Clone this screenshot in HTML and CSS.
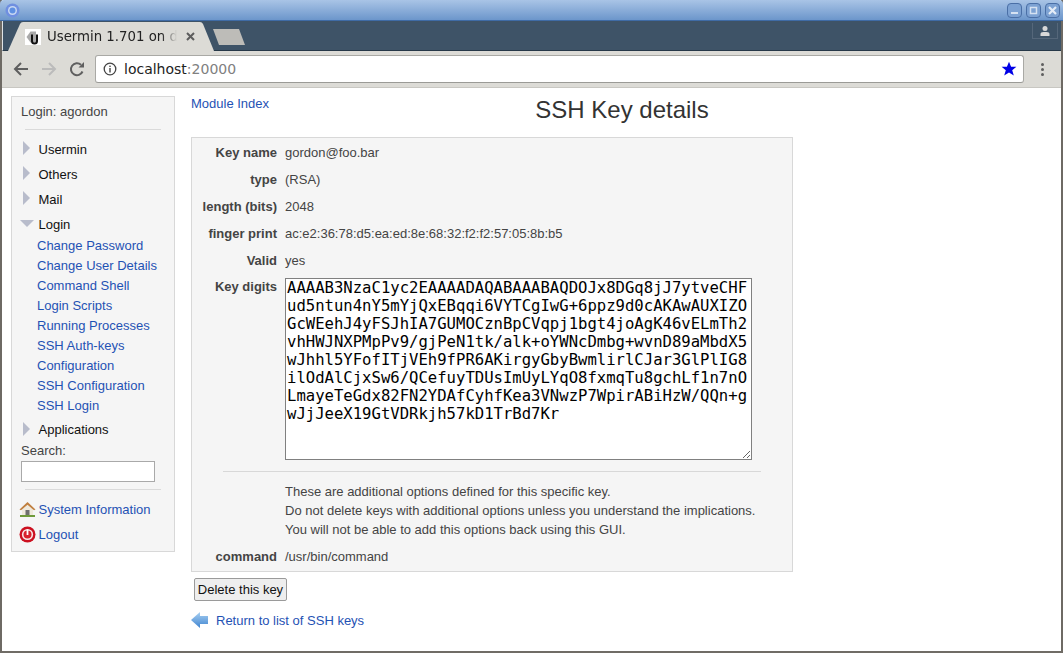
FILE: index.html
```html
<!DOCTYPE html>
<html lang="en">
<head>
<meta charset="utf-8">
<title>Usermin 1.701</title>
<link rel="stylesheet" href="styles.css">
</head>
<body>
<div class="window">
  <div class="titlebar">
    <svg class="app-logo" width="15" height="15" viewBox="0 0 15 15"><circle cx="7.500" cy="7.500" r="7" fill="#6f8fe0"/><circle cx="7.500" cy="7.500" r="4.500" fill="#c9d8f2"/><circle cx="7.500" cy="7.500" r="3" fill="#5f90e2"/></svg>
    <div class="winbtns">
      <span class="winbtn"><svg width="13" height="13" viewBox="0 0 13 13"><rect x="3" y="8" width="7" height="2" fill="#d6e2f2"/></svg></span>
      <span class="winbtn"><svg width="13" height="13" viewBox="0 0 13 13"><rect x="3.500" y="3.500" width="6" height="6" fill="none" stroke="#d6e2f2" stroke-width="1.500"/></svg></span>
      <span class="winbtn"><svg width="13" height="13" viewBox="0 0 13 13"><path d="M3 3l7 7M10 3l-7 7" stroke="#e4ecf7" stroke-width="2.200"/></svg></span>
    </div>
  </div>
  <div class="tabstrip">
    <div class="tab">
      <svg class="tab-shape" width="206" height="29" viewBox="0 0 206 29"><path d="M0 29L12 2Q13 0 15 0H192Q194 0 195 2L206 29Z" fill="#dcdbd6"/></svg>
      <svg class="favicon" width="16" height="16" viewBox="0 0 16 16"><rect width="16" height="16" fill="#fff"/><path d="M1.500 8l4-5.500h5.500v11H5.500z" fill="#a9a9a9"/><path d="M7 5.500v6.500q0 2.500 2.500 2.500T12 12V5.500" fill="none" stroke="#111" stroke-width="2"/></svg>
      <span class="tab-title">Usermin 1.701 on di</span>
      <svg class="tab-close" width="9" height="9" viewBox="0 0 9 9"><path d="M1 1l7 7M8 1l-7 7" stroke="#5d5d5d" stroke-width="2"/></svg>
    </div>
    <svg class="newtab" width="32" height="16" viewBox="0 0 32 16"><path d="M0 0H26L32 16H6Z" fill="#bdbcb8"/></svg>
    <div class="profile"><svg width="12" height="12" viewBox="0 0 12 12"><circle cx="6" cy="3.500" r="2.500" fill="#d8d8d8"/><path d="M1.500 11V9q0-2 3-2h3q3 0 3 2v2z" fill="#d8d8d8"/></svg></div>
  </div>
  <div class="toolbar">
    <svg class="nav" width="18" height="18" viewBox="0 0 18 18"><path d="M16 9H3M9 3L3 9l6 6" fill="none" stroke="#5f5f5f" stroke-width="2"/></svg>
    <svg class="nav" width="18" height="18" viewBox="0 0 18 18"><path d="M2 9h13M9 3l6 6-6 6" fill="none" stroke="#bbb" stroke-width="2"/></svg>
    <svg class="nav" width="18" height="18" viewBox="0 0 18 18"><path d="M14.500 11.500A6 6 0 1 1 13 4.800" fill="none" stroke="#5f5f5f" stroke-width="2"/><path d="M10.500 7.500H16V2z" fill="#5f5f5f"/></svg>
    <div class="omnibox">
      <svg class="info" width="14" height="14" viewBox="0 0 14 14"><circle cx="7" cy="7" r="5.800" fill="none" stroke="#444" stroke-width="1.300"/><rect x="6.300" y="6" width="1.400" height="4.500" fill="#444"/><rect x="6.300" y="3.600" width="1.400" height="1.400" fill="#444"/></svg>
      <span class="url">localhost<span class="port">:20000</span></span>
      <svg class="star" width="16" height="16" viewBox="0 0 16 16"><path d="M8 .8l2.100 5h5.300l-4.200 3.400 1.600 5.400L8 11.500l-4.800 3.100 1.600-5.400L.6 5.800h5.300z" fill="#0000e6"/></svg>
    </div>
    <div class="menu"><i></i><i></i><i></i></div>
  </div>
  <div class="page">
    <aside class="side">
      <div class="login">Login: agordon</div>
      <hr class="rule">
      <div class="cat"><span class="tri-r"></span>Usermin</div>
      <div class="cat"><span class="tri-r"></span>Others</div>
      <div class="cat"><span class="tri-r"></span>Mail</div>
      <div class="cat"><span class="tri-d"></span>Login</div>
      <ul class="links">
        <li><a href="#">Change Password</a></li>
        <li><a href="#">Change User Details</a></li>
        <li><a href="#">Command Shell</a></li>
        <li><a href="#">Login Scripts</a></li>
        <li><a href="#">Running Processes</a></li>
        <li><a href="#">SSH Auth-keys</a></li>
        <li><a href="#">Configuration</a></li>
        <li><a href="#">SSH Configuration</a></li>
        <li><a href="#">SSH Login</a></li>
      </ul>
      <div class="cat cat-last"><span class="tri-r"></span>Applications</div>
      <div class="search-label">Search:</div>
      <input class="search" type="text">
      <hr class="rule rule-low">
      <div class="sys">
        <svg width="17" height="17" viewBox="0 0 17 17"><path d="M3 8l5.500-4.500L14 8v6.500H3z" fill="#efe9dc"/><path d="M.5 8.500L8.500 1l8 7.500-1.500.8L8.500 3.800 2 9.300z" fill="#c07f3f"/><rect x="6.500" y="9" width="4" height="5.500" fill="#6e6e6e"/><rect x="1" y="14" width="15" height="2" fill="#6f9a3a"/></svg>
        <a href="#">System Information</a>
      </div>
      <div class="sys sys-logout">
        <svg width="17" height="17" viewBox="0 0 17 17"><circle cx="8.500" cy="8.500" r="8" fill="#cc1020"/><circle cx="8.500" cy="8.500" r="5.600" fill="#f8e8e8"/><circle cx="8.500" cy="8.500" r="4" fill="#d8202c"/><rect x="7.600" y="3.500" width="1.800" height="5.500" fill="#fff"/></svg>
        <a href="#">Logout</a>
      </div>
    </aside>
    <main class="main">
      <div class="head">
        <a class="modidx" href="#">Module Index</a>
        <h1>SSH Key details</h1>
      </div>
      <div class="box">
        <div class="row"><b>Key name</b><span>gordon@foo.bar</span></div>
        <div class="row"><b>type</b><span>(RSA)</span></div>
        <div class="row"><b>length (bits)</b><span>2048</span></div>
        <div class="row"><b>finger print</b><span>ac:e2:36:78:d5:ea:ed:8e:68:32:f2:f2:57:05:8b:b5</span></div>
        <div class="row"><b>Valid</b><span>yes</span></div>
        <div class="row row-key"><b>Key digits</b><textarea class="key" spellcheck="false">AAAAB3NzaC1yc2EAAAADAQABAAABAQDOJx8DGq8jJ7ytveCHFud5ntun4nY5mYjQxEBqqi6VYTCgIwG+6ppz9d0cAKAwAUXIZOGcWEehJ4yFSJhIA7GUMOCznBpCVqpj1bgt4joAgK46vELmTh2vhHWJNXPMpPv9/gjPeN1tk/alk+oYWNcDmbg+wvnD89aMbdX5wJhhl5YFofITjVEh9fPR6AKirgyGbyBwmlirlCJar3GlPlIG8ilOdAlCjxSw6/QCefuyTDUsImUyLYqO8fxmqTu8gchLf1n7nOLmayeTeGdx82FN2YDAfCyhfKea3VNwzP7WpirABiHzW/QQn+gwJjJeeX19GtVDRkjh57kD1TrBd7Kr</textarea></div>
        <hr class="sep">
        <div class="row row-note"><b></b><span>These are additional options defined for this specific key.<br>Do not delete keys with additional options unless you understand the implications.<br>You will not be able to add this options back using this GUI.</span></div>
        <div class="row row-cmd"><b>command</b><span>/usr/bin/command</span></div>
      </div>
      <button class="del" type="button">Delete this key</button>
      <div class="back">
        <svg width="17" height="18" viewBox="0 0 17 18"><defs><linearGradient id="arrow" x1="0" y1="0" x2="0" y2="1"><stop offset="0" stop-color="#a8d0f2"/><stop offset="1" stop-color="#3f84d0"/></linearGradient></defs><path d="M0 9L9 1v4h8v8H9v4z" fill="url(#arrow)"/></svg>
        <a href="#">Return to list of SSH keys</a>
      </div>
    </main>
  </div>
</div>
</body>
</html>
```
FILE: styles.css
```css
html,body{margin:0;padding:0;height:100%;overflow:hidden;background:#fff}
body{font-family:"Liberation Sans",Arial,sans-serif;font-size:13px;color:#444}
a{color:#1f52b4;text-decoration:none}
.window{box-sizing:border-box;width:1063px;height:653px;display:flex;flex-direction:column;border:1px solid #6e6a64;border-width:0 2px 2px;border-bottom-color:#706c66}
.titlebar{height:21px;margin:0 -2px;background:linear-gradient(#a9c4e6,#6c96cb);border-bottom:1px solid #3f6ba5;box-sizing:border-box;display:flex;align-items:center;padding:0 3px 0 5px;justify-content:space-between;border-radius:4px 4px 0 0}
.winbtns{display:flex;gap:4px}
.winbtn{width:15px;height:15px;box-sizing:border-box;border:1px solid #4a6fa6;border-radius:4px;background:#7da2d3;display:flex;align-items:center;justify-content:center}
.winbtn svg{flex:none}
.tabstrip{height:30px;background:#3e5367;display:flex;position:relative;align-items:flex-end;border-bottom:1px solid #263848;border-left:1px solid #dfe3e6;box-sizing:border-box}
.tab{position:relative;width:206px;height:29px;margin:0 0 -1px 5px;display:flex;align-items:center;flex:none}
.tab-shape{position:absolute;left:0;top:0}
.favicon{position:relative;margin-left:17px;flex:none}
.tab-title{position:relative;margin-left:6px;width:130px;font-family:"DejaVu Sans",sans-serif;font-size:13.3px;white-space:nowrap;color:#222;-webkit-mask-image:linear-gradient(90deg,#000 88%,transparent 100%);mask-image:linear-gradient(90deg,#000 88%,transparent 100%)}
.tab-close{position:relative;margin-left:9px}
.newtab{margin:0 0 5px -1px;flex:none}
.profile{position:absolute;right:3px;top:2px;width:24px;height:15px;border:1px solid #55677a;border-top:0;display:flex;align-items:center;justify-content:center}
.toolbar{height:37px;background:#dcdbd6;display:flex;align-items:center;border-bottom:1px solid #c8c7c2;box-sizing:border-box;padding:0 0 0 10px}
.nav{margin-right:10px;flex:none}
.omnibox{box-sizing:border-box;width:929px;height:28px;margin-left:-1px;background:#fff;border:1px solid #a9a9a5;border-bottom-color:#9a9a96;border-radius:3px;display:flex;align-items:center;padding:0 6px 0 7px}
.info{flex:none}
.url{margin-left:7px;font-family:"DejaVu Sans",sans-serif;font-size:14px;color:#222;flex:1}
.port{color:#808080}
.menu{display:flex;flex-direction:column;gap:2px;margin-left:17px}
.menu i{display:block;width:3px;height:3px;border-radius:50%;background:#5f5f5f}
.page{flex:1;display:flex;align-items:flex-start;padding:8px 0 0 9px;min-height:0}
.side{box-sizing:border-box;width:164px;height:456px;background:#f5f5f5;border:1px solid #d8d8d8;padding:0 0 0 9px;flex:none;display:flex;flex-direction:column}
.login{margin-top:7px;line-height:15px}
.rule{margin:10px 0 0 4px;width:136px;height:1px;border:0;background:#dadada;flex:none}
.cat{height:25px;line-height:25px;color:#111;position:relative;padding-left:17.500px;flex:none}
.rule + .cat{margin-top:7px}
.tri-r,.tri-d{position:absolute;width:0;height:0}
.tri-r{left:2px;top:4px;border-left:7px solid #b8bccb;border-top:7px solid transparent;border-bottom:7px solid transparent}
.tri-d{left:-1px;top:8px;border-top:7px solid #b8bccb;border-left:7px solid transparent;border-right:7px solid transparent}
.links{list-style:none;margin:0;padding:0 0 0 16px;flex:none}
.links li{height:20px;line-height:20px}
.links li:first-child{margin-top:-1px}
.cat-last{margin-top:2px;height:24px;line-height:24px}
.search-label{line-height:14px;margin-top:2px}
.search{box-sizing:border-box;display:block;width:134px;height:21px;margin:3px 0 0;background:#fff;border:1px solid #a9a9a9;padding:0;flex:none}
.rule-low{margin-top:7px}
.sys{display:flex;align-items:center;gap:2.500px;height:25px;margin:7px 0 0 -2px;white-space:nowrap}
.sys-logout{margin-top:0}
.sys svg{flex:none}
.main{flex:none;width:602px;margin-left:16px;display:flex;flex-direction:column;align-items:flex-start}
.head{width:862px;height:41px;position:relative;display:flex;justify-content:center}
.modidx{position:absolute;left:0;top:0;line-height:15px}
h1{margin:0;font-size:24px;font-weight:400;color:#333;line-height:28px;padding-top:0}
.box{box-sizing:border-box;width:602px;height:435px;background:#f5f5f5;border:1px solid #d8d8d8}
.row{display:flex;align-items:flex-start;gap:8px;height:27px;padding-top:7px;box-sizing:border-box;line-height:16px}
.row b{width:85px;text-align:right;flex:none;white-space:nowrap;color:#444}
.row-key{height:auto;padding-top:5px}
.row-key b{padding-top:1px}
.key{box-sizing:border-box;display:block;width:467px;height:182px;margin:0;padding:0 1px;border:1px solid #808080;background:#fff;color:#000;font-family:"DejaVu Sans Mono",monospace;font-size:15.6px;line-height:18px;resize:both;overflow:hidden}
.sep{margin:11px 0 0 31px;width:538px;height:1px;border:0;background:#d8d8d8}
.row-note{height:auto;padding-top:10px;line-height:19px}
.row-cmd{height:27px;padding-top:10px}
.del{box-sizing:border-box;width:93px;height:23px;margin:6px 0 0 3px;padding:0;background:#eee;border:1px solid #9a9a9a;border-radius:2px;font:13px "Liberation Sans",Arial,sans-serif;color:#111}
.back{display:flex;align-items:center;gap:8px;margin-top:10px;height:18px}
```
